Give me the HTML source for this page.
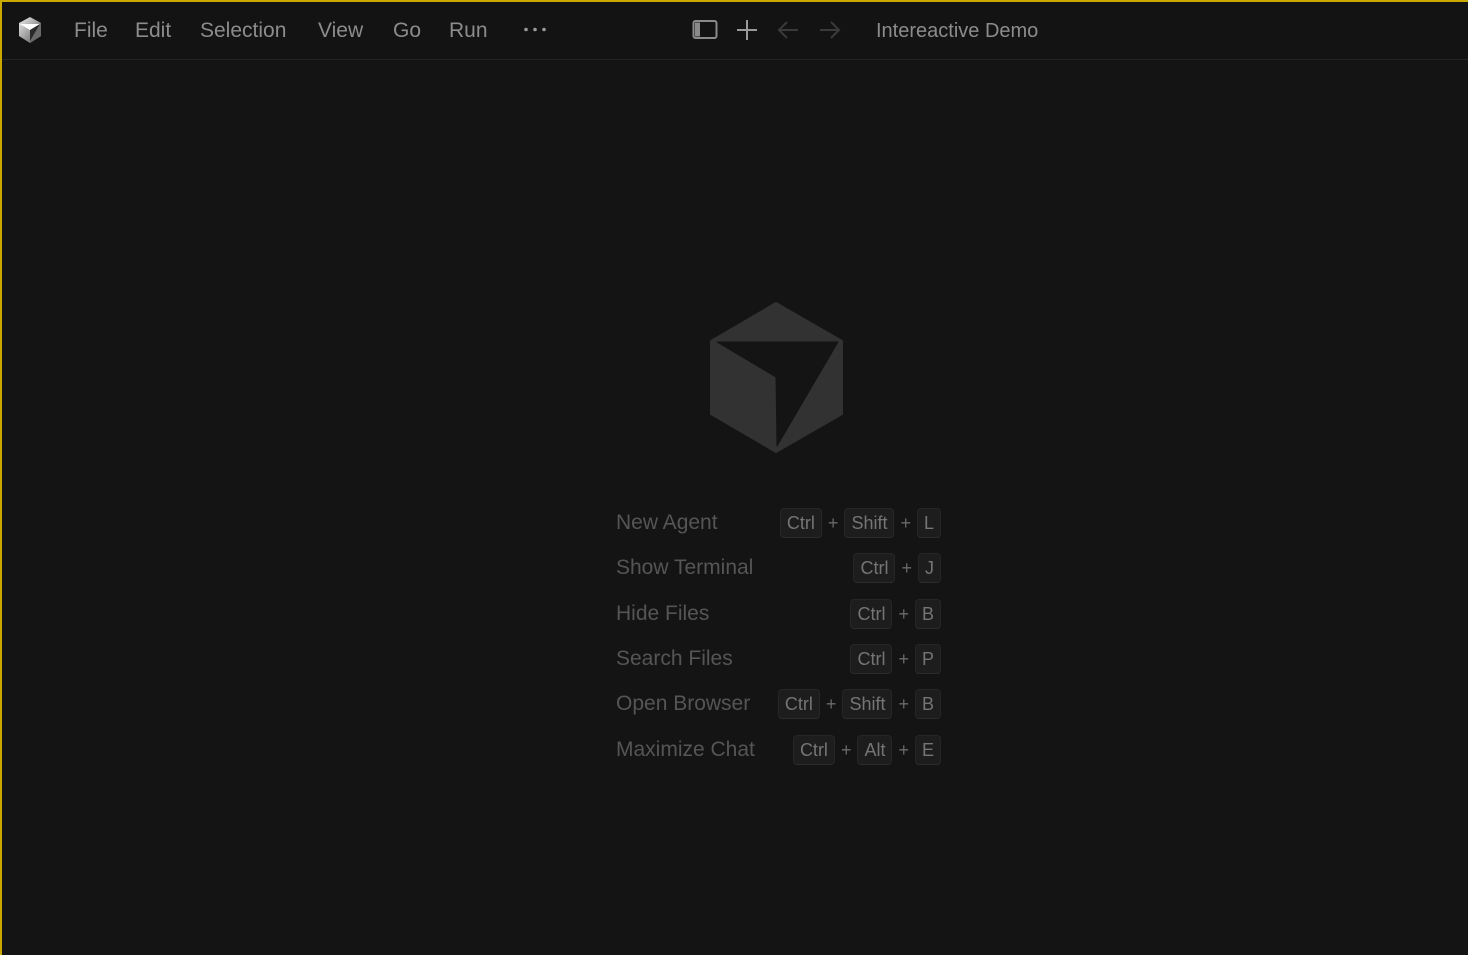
<!DOCTYPE html>
<html><head><style>
*{margin:0;padding:0;box-sizing:border-box}
html,body{width:1468px;height:955px;overflow:hidden;background:#141414;font-family:"Liberation Sans","DejaVu Sans",sans-serif}
.frame{position:absolute;left:0;top:0;width:1468px;height:955px;border-top:2px solid #c9a800;border-left:2px solid #c9a800}
.bar{position:absolute;left:2px;top:2px;right:0;height:58px;border-bottom:1px solid #232323;background:#131313}
.menu{position:absolute;top:19px;font-size:21px;color:#8c8c8c}
.title{position:absolute;left:876px;top:20px;font-size:20px;color:#8c8c8c}
.row{position:absolute;left:616px;width:325px;height:30px;display:flex;align-items:center;justify-content:space-between}
.lbl{font-size:21px;color:#555}
.keys{display:flex;align-items:center;font-size:18px;color:#757575}
.k{background:#1d1d1d;border:1px solid #262626;border-bottom-color:#2c2c2c;border-radius:4px;height:30px;line-height:28px;padding:0 6px}
.p{margin:0 6px;color:#6a6a6a}
</style></head><body>
<div class="frame"></div>
<div class="bar"></div>
<svg style="position:absolute;left:17px;top:16px" width="26" height="28" viewBox="0 0 26 28">
<defs><linearGradient id="g" x1="0" y1="0" x2="1" y2="1"><stop offset="0" stop-color="#eee"/><stop offset="1" stop-color="#555"/></linearGradient></defs>
<polygon points="13,1 24,7 24,20 13,27 2,20 2,7" fill="url(#g)"/>
<polygon points="13,14 24,7 24,20 13,27" fill="#6a6a6a"/>
<polygon points="3,8 23,8 13,14" fill="#ffffff"/>
<polygon points="13,14 23,8 13,25" fill="#2a2a2a"/>
</svg>
<div class="menu" style="left:74px">File</div>
<div class="menu" style="left:135px">Edit</div>
<div class="menu" style="left:200px">Selection</div>
<div class="menu" style="left:318px">View</div>
<div class="menu" style="left:393px">Go</div>
<div class="menu" style="left:449px">Run</div>
<svg style="position:absolute;left:522px;top:26px" width="26" height="8"><circle cx="4" cy="3.5" r="1.8" fill="#9a9a9a"/><circle cx="13" cy="3.5" r="1.8" fill="#9a9a9a"/><circle cx="22" cy="3.5" r="1.8" fill="#9a9a9a"/></svg>
<svg style="position:absolute;left:692px;top:19px" width="26" height="22" viewBox="0 0 26 22">
<rect x="1.5" y="2" width="23" height="17" rx="2" fill="none" stroke="#8a8a8a" stroke-width="2"/>
<rect x="3" y="3.5" width="5" height="14" fill="#8a8a8a"/>
</svg>
<svg style="position:absolute;left:736px;top:19px" width="22" height="22" viewBox="0 0 22 22"><path d="M11 1V21M1 11H21" stroke="#9a9a9a" stroke-width="2"/></svg>
<svg style="position:absolute;left:776px;top:19px" width="24" height="22" viewBox="0 0 24 22"><path d="M22 11H3M11 3L3 11L11 19" fill="none" stroke="#3a3a3a" stroke-width="2"/></svg>
<svg style="position:absolute;left:818px;top:19px" width="24" height="22" viewBox="0 0 24 22"><path d="M2 11H21M13 3L21 11L13 19" fill="none" stroke="#3a3a3a" stroke-width="2"/></svg>
<div class="title">Intereactive Demo</div>
<svg style="position:absolute;left:0;top:0" width="1468" height="955">
<polygon points="776,303 842,341 842,414 776,452 711,414 711,341" fill="#323232" stroke="#323232" stroke-width="2" stroke-linejoin="round"/>
<polygon points="717,342 838,342 777,446 776,377" fill="#141414" stroke="#141414" stroke-width="1" stroke-linejoin="round"/>
</svg>
<div class="row" style="top:508px"><span class="lbl">New Agent</span><span class="keys"><span class="k">Ctrl</span><span class="p">+</span><span class="k">Shift</span><span class="p">+</span><span class="k">L</span></span></div>
<div class="row" style="top:553px"><span class="lbl">Show Terminal</span><span class="keys"><span class="k">Ctrl</span><span class="p">+</span><span class="k">J</span></span></div>
<div class="row" style="top:599px"><span class="lbl">Hide Files</span><span class="keys"><span class="k">Ctrl</span><span class="p">+</span><span class="k">B</span></span></div>
<div class="row" style="top:644px"><span class="lbl">Search Files</span><span class="keys"><span class="k">Ctrl</span><span class="p">+</span><span class="k">P</span></span></div>
<div class="row" style="top:689px"><span class="lbl">Open Browser</span><span class="keys"><span class="k">Ctrl</span><span class="p">+</span><span class="k">Shift</span><span class="p">+</span><span class="k">B</span></span></div>
<div class="row" style="top:735px"><span class="lbl">Maximize Chat</span><span class="keys"><span class="k">Ctrl</span><span class="p">+</span><span class="k">Alt</span><span class="p">+</span><span class="k">E</span></span></div>
</body></html>
